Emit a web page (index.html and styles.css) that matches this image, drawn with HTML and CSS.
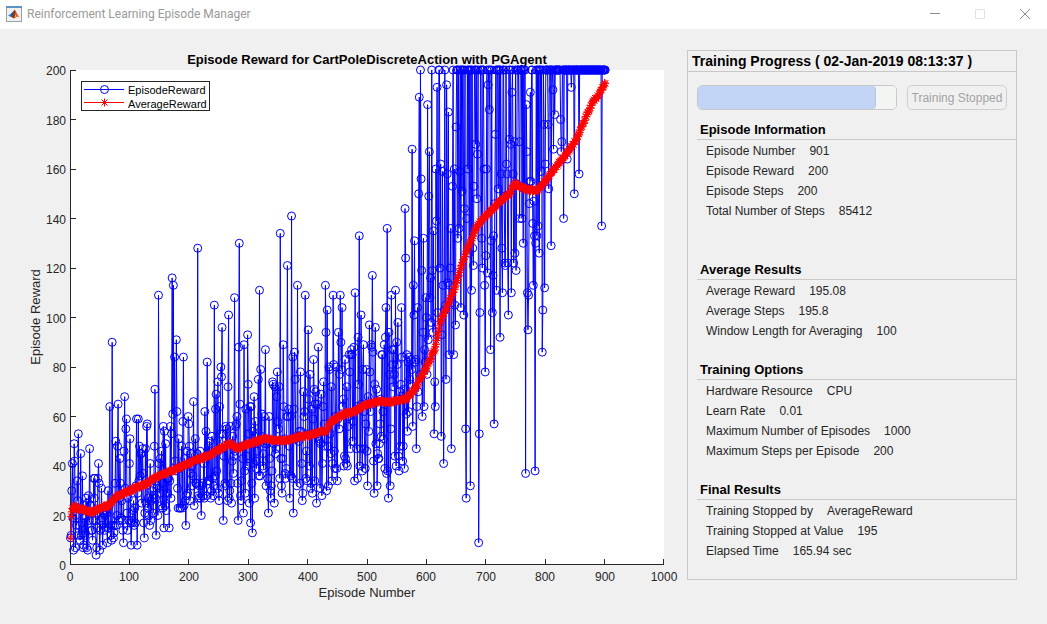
FILE: index.html
```html
<!DOCTYPE html>
<html lang="en">
<head>
<meta charset="utf-8">
<title>Reinforcement Learning Episode Manager</title>
<link rel="stylesheet" href="styles.css">
</head>
<body>
<header class="titlebar">
  <svg class="app-icon" viewBox="0 0 16 16" aria-hidden="true">
    <rect x=".5" y=".5" width="15" height="15" fill="#eef0f2" stroke="#9a9fa5"/>
    <rect x="0" y="0" width="16" height="2" fill="#5c93c5"/>
    <path d="M2 9.500 5 7.800 7 8 5 11Z" fill="#337dbd"/>
    <path d="M5 7.800 8.500 4 7.500 9 5 11.500Z" fill="#234d86"/>
    <path d="M8.700 3.500C10 5 11.500 9 13.500 11.500L11.500 10.500 8 12.500 6.500 10.500Z" fill="#dc5a1c"/>
    <path d="M8.700 3.500 9.500 7 8 12.500 5.500 11C7 10 8 6 8.700 3.500Z" fill="#8e2c19"/>
    <path d="M9.500 7 10.300 10.500 8.500 12Z" fill="#f5a53a"/>
  </svg>
  <h1 class="window-title">Reinforcement Learning Episode Manager</h1>
  <div class="window-controls">
    <button class="window-button" aria-label="Minimize"><svg viewBox="0 0 12 12"><path d="M1 5.500H11" stroke="#8b8b8b"/></svg></button>
    <button class="window-button" aria-label="Maximize" disabled><svg viewBox="0 0 12 12"><path d="M1.500 1.500H10.500V10.500H1.500Z" stroke="#e3e3e3"/></svg></button>
    <button class="window-button" aria-label="Close"><svg viewBox="0 0 12 12"><path d="M1 1 11 11M11 1 1 11" stroke="#8b8b8b"/></svg></button>
  </div>
</header>
<main class="workspace">
  <svg class="chart" id="chart" viewBox="0 0 687 595" role="img" aria-label="Episode reward chart">
    <rect class="plot-area" x="70" y="41" width="594" height="495"/>
    <text class="chart-title" x="367" y="35">Episode Reward for CartPoleDiscreteAction with PGAgent</text>
    <path class="axis" id="axis"/>
    <g id="ticks"></g>
    <text class="axis-label" x="367" y="568">Episode Number</text>
    <text class="axis-label" transform="translate(40 288) rotate(-90)">Episode Reward</text>
    <path class="series-episode" id="episode"/>
    <path class="series-average" id="average"/>
    <rect class="legend-box" x="81.500" y="52.500" width="128" height="29"/>
    <path class="series-episode" d="M84 60.500H124M108.500 60.500a4 4 0 1 0-8 0a4 4 0 1 0 8 0"/>
    <path class="series-average" d="M84 73.500H124M104.500 69.500v8M101.500 70.500l6 6M101.500 76.500l6-6"/>
    <text class="legend-text" x="128" y="65">EpisodeReward</text>
    <text class="legend-text" x="128" y="79">AverageReward</text>
  </svg>
  <section class="panel">
    <h2 class="panel-title">Training Progress ( 02-Jan-2019 08:13:37 )</h2>
    <div class="progress-row">
      <progress class="progress" value="901" max="1000" aria-label="Training progress"></progress>
      <button class="stop-button" disabled>Training Stopped</button>
    </div>
    <section class="group group-first">
      <h3 class="group-title">Episode Information</h3>
      <dl class="rows">
        <div class="row"><dt>Episode Number</dt><dd>901</dd></div>
        <div class="row"><dt>Episode Reward</dt><dd>200</dd></div>
        <div class="row"><dt>Episode Steps</dt><dd>200</dd></div>
        <div class="row"><dt>Total Number of Steps</dt><dd>85412</dd></div>
      </dl>
    </section>
    <section class="group">
      <h3 class="group-title">Average Results</h3>
      <dl class="rows">
        <div class="row"><dt>Average Reward</dt><dd>195.08</dd></div>
        <div class="row"><dt>Average Steps</dt><dd>195.8</dd></div>
        <div class="row"><dt>Window Length for Averaging</dt><dd>100</dd></div>
      </dl>
    </section>
    <section class="group">
      <h3 class="group-title">Training Options</h3>
      <dl class="rows">
        <div class="row"><dt>Hardware Resource</dt><dd>CPU</dd></div>
        <div class="row"><dt>Learn Rate</dt><dd>0.01</dd></div>
        <div class="row"><dt>Maximum Number of Episodes</dt><dd>1000</dd></div>
        <div class="row"><dt>Maximum Steps per Episode</dt><dd>200</dd></div>
      </dl>
    </section>
    <section class="group">
      <h3 class="group-title">Final Results</h3>
      <dl class="rows">
        <div class="row"><dt>Training Stopped by</dt><dd>AverageReward</dd></div>
        <div class="row"><dt>Training Stopped at Value</dt><dd>195</dd></div>
        <div class="row"><dt>Elapsed Time</dt><dd>165.94 sec</dd></div>
      </dl>
    </section>
  </section>
</main>
<script src="chart.js"></script>
</body>
</html>
```

FILE: styles.css
```css
* { box-sizing: border-box; }
body {
  margin: 0;
  min-height: 100vh;
  background: #f0f0f0;
  color: #262626;
  font: 12px/20px "Liberation Sans", Arial, sans-serif;
}
h1, h2, h3, dl, dd { margin: 0; }
.titlebar {
  display: flex;
  align-items: center;
  height: 29px;
  padding: 0 0 2px 6px;
  background: #fff;
}
.app-icon { width: 16px; height: 16px; }
.window-title {
  margin-left: 5px;
  color: #999;
  font: 12px/20px Roboto, "Open Sans", sans-serif;
}
.window-controls { display: flex; margin-left: auto; }
.window-button {
  display: grid;
  place-items: center;
  width: 45px;
  height: 27px;
  padding: 0;
  border: 0;
  background: none;
}
.window-button svg { width: 12px; height: 12px; fill: none; }
.workspace {
  display: grid;
  grid-template-columns: minmax(0, 1fr) 330px;
  align-items: start;
  padding-right: 30px;
}
.chart { display: block; width: 100%; }
.plot-area { fill: #fff; }
.axis { fill: none; stroke: #262626; }
.chart text { fill: #262626; font-size: 12px; }
.chart .chart-title { fill: #000; font-size: 13px; font-weight: bold; text-anchor: middle; }
.chart .axis-label { font-size: 13px; text-anchor: middle; }
.tick-x { text-anchor: middle; }
.tick-y { text-anchor: end; }
.chart .legend-text { font-size: 11px; fill: #000; }
.legend-box { fill: #fff; stroke: #262626; }
.series-episode { fill: none; stroke: #00f; }
.series-average { fill: none; stroke: #f00; }
.panel {
  margin-top: 21px;
  padding-bottom: 19px;
  border: 1px solid #c8c8c8;
}
.panel-title {
  padding-left: 4px;
  border-bottom: 1px solid #c8c8c8;
  color: #000;
  font-size: 14px;
  line-height: 20px;
}
.progress-row {
  display: grid;
  grid-template-columns: 2fr 1fr;
  gap: 10px;
  padding: 13px 9px 0;
}
.progress {
  appearance: none;
  width: 100%;
  height: 25px;
  overflow: hidden;
  border: 1px solid #c8c8c8;
  border-radius: 5px;
  background: #f3f5f3;
}
.progress::-webkit-progress-bar { background: #f3f5f3; }
.progress::-webkit-progress-value {
  border-right: 1px solid #b8c4da;
  border-radius: 0 4px 4px 0;
  background: #c2d4f5;
}
.stop-button {
  height: 25px;
  padding: 0;
  border: 1px solid #cfcfcf;
  border-radius: 5px;
  background: #f0f0f0;
  color: #a3a3a3;
  font: inherit;
  white-space: nowrap;
}
.group { margin: 20px 0 0 9px; }
.group-first { margin: 10px 0 40px 9px; }
.group-first + .group { margin-top: 0; }
.group-title {
  height: 20px;
  padding-left: 3px;
  border-bottom: 1px solid #c8c8c8;
  color: #000;
  font-size: 13px;
  line-height: 19px;
}
.row { display: flex; gap: 14px; height: 20px; padding-left: 9px; line-height: 22px; }
```

FILE: chart.js
```js
const X0 = 70, Y0 = 536, SX = 0.594, SY = 2.475;
const px = n => X0 + n * SX;
const py = v => Y0 - v * SY;

let axis = `M${X0 + 0.5} ${Y0 - 495}V${Y0 - 0.5}H664`;
let labels = "";
for (let n = 0; n <= 1000; n += 100) {
  const x = Math.min(663.5, Math.floor(px(n)) + 0.5);
  axis += `M${x} ${Y0}v-6`;
  labels += `<text class="tick-x" x="${Math.round(px(n))}" y="552">${n}</text>`;
}
for (let v = 0; v <= 200; v += 20) {
  axis += `M${X0} ${Math.min(535.5, Math.floor(py(v)) + 0.5)}h6`;
  labels += `<text class="tick-y" x="66" y="${Math.round(py(v)) + 5}">${v}</text>`;
}
document.getElementById("axis").setAttribute("d", axis);
document.getElementById("ticks").innerHTML = labels;

const averageKnots = [1,11, 2,19, 4,23, 8,24, 12,22, 18,23, 35,21, 50,23, 65,24, 80,28, 90,29, 110,31, 130,33, 150,36, 170,38,
  200,41, 220,43, 240,45, 260,48, 270,49, 280,47, 300,49, 330,51, 350,50, 370,50.5, 385,52, 400,52, 420,54, 430,54,
  440,58, 460,61, 480,62, 500,65, 520,66, 540,66, 565,67, 580,71, 598,79, 614,87, 623,98, 645,110, 662,123, 685,137,
  700,141, 720,146, 740,150, 748,154, 765,152, 785,151, 800,155, 815,160, 835,166, 850,171, 860,176, 870,182, 880,187,
  890,190, 901,195];
function averageAt(n) {
  let i = 2;
  while (averageKnots[i] < n) i += 2;
  const a = averageKnots[i - 2], b = averageKnots[i];
  return averageKnots[i - 1] + (averageKnots[i + 1] - averageKnots[i - 1]) * (n - a) / (b - a);
}

const recorded = new Map();
const pairs = [1,11, 3,30, 4,41, 6,6, 7,49, 14,53, 18,45, 30,6, 33,47, 38,10, 44,4, 50,6, 63,9, 67,64, 70,10, 71,90,
  81,65, 86,19, 90,9, 92,68, 95,59, 103,8, 105,17, 112,59, 113,8, 125,11, 130,57, 134,16, 143,71, 145,12, 149,109,
  157,56, 158,15, 167,15, 172,116, 174,113, 173,61, 176,84, 179,91, 180,62, 182,23, 191,84, 195,16, 199,60, 208,66,
  209,24, 215,128, 221,20, 231,82, 243,105, 249,74, 254,80, 255,76, 256,96, 258,18, 266,72, 267,101, 268,27, 272,25,
  277,108, 283,18, 284,88, 285,130, 288,26, 292,21, 293,89, 299,93, 300,73, 304,17, 307,13, 317,75, 319,111, 321,79,
  329,87, 334,21, 344,25, 349,78, 354,134, 357,29, 359,89, 366,121, 370,27, 373,141, 375,84, 376,21, 378,86, 383,113,
  388,78, 391,26, 396,109, 401,95, 410,83, 415,25, 418,88, 421,31, 430,113, 431,94, 433,103, 435,32, 441,34, 443,109,
  444,81, 450,34, 452,94, 455,109, 456,90, 458,104, 461,40, 467,40, 473,85, 480,110, 484,35, 485,92, 487,133, 490,101,
  494,89, 501,32, 504,97, 507,89, 509,117, 510,86, 512,29, 517,32, 526,85, 529,89, 532,104, 533,37, 534,136, 536,27,
  539,32, 541,109, 545,87, 548,111, 558,104, 559,84, 560,42, 563,39, 564,144, 565,124, 576,168, 577,56, 578,113,
  580,131, 583,47, 587,150, 588,189, 590,200, 591,156, 593,60, 596,64, 602,186, 603,91, 604,149, 605,167, 613,53,
  614,74, 615,64, 618,193, 625,52, 629,41, 633,75, 634,194, 637,183, 638,85, 642,47, 646,85, 650,177, 666,55, 667,27,
  674,32, 688,9, 689,53, 690,102, 698,113, 699,78, 704,194, 706,184, 708,87, 711,102, 714,57, 724,92, 733,121,
  738,101, 744,191, 748,171, 751,119, 767,37, 768,186, 770,110, 771,95, 775,191, 783,38, 784,130, 790,126, 795,86,
  796,103, 799,112, 805,178, 806,152, 810,129, 826,180, 831,140, 837,164, 844,193, 849,150, 857,158, 895,137, 901,200];
for (let i = 0; i < pairs.length; i += 2) recorded.set(pairs[i], pairs[i + 1]);

let state = 20190102;
function random() {
  state = (state + 0x6D2B79F5) | 0;
  let t = Math.imul(state ^ (state >>> 15), 1 | state);
  t = (t + Math.imul(t ^ (t >>> 7), 61 | t)) ^ t;
  return ((t ^ (t >>> 14)) >>> 0) / 4294967296;
}
function spread(limitLow, limitHigh, width) {
  for (;;) {
    const f = 0.93 * Math.exp((random() + random() + random() - 1.5) * width);
    if (f > limitLow && f < limitHigh) return f;
  }
}
function rewardAt(n) {
  const r = random(), q = random();
  if (recorded.has(n)) return recorded.get(n);
  const a = averageAt(n);
  if (n < 60) return Math.round(a * spread(0.3, 1.85, 1.5));
  if (n < 130) return Math.round(a * spread(0.4, 1.9, 1.3));
  if (n < 440) return Math.round(a * spread(0.5, 1.5, 1.15));
  if (n < 570) return Math.round(a * spread(0.55, 1.5, 1));
  if (n < 587) return Math.round(a * spread(0.85, 1.6, 0.8));
  if (n < 615) return r < 0.08 ? 200 : Math.round(a * (0.95 + q * 0.8));
  if (n < 665) return r < 0.34 ? 200 : Math.round(92 + q * 78);
  if (n < 785) return r < 0.47 ? 200 : Math.round(108 + q * 66);
  if (n < 808) return r < 0.66 ? 200 : Math.round(130 + q * 50);
  if (n < 830) return r < 0.85 ? 200 : Math.round(165 + q * 30);
  return 200;
}

let line = "", circles = "", stars = "", averageLine = "";
for (let n = 1; n <= 901; n++) {
  const x = px(n).toFixed(2), y = py(rewardAt(n)).toFixed(2);
  line += `${n === 1 ? "M" : "L"}${x} ${y}`;
  circles += `M${x} ${y}m4 0a4 4 0 1 0-8 0a4 4 0 1 0 8 0`;
  const ay = py(averageAt(n) + (random() - 0.5) * 1.2).toFixed(2);
  averageLine += `${n === 1 ? "M" : "L"}${x} ${ay}`;
  stars += `M${x} ${ay}m-4 0h8m-4-4v8m-3-7l6 6m0-6l-6 6`;
}
document.getElementById("episode").setAttribute("d", line + circles);
document.getElementById("average").setAttribute("d", averageLine + stars);
```
